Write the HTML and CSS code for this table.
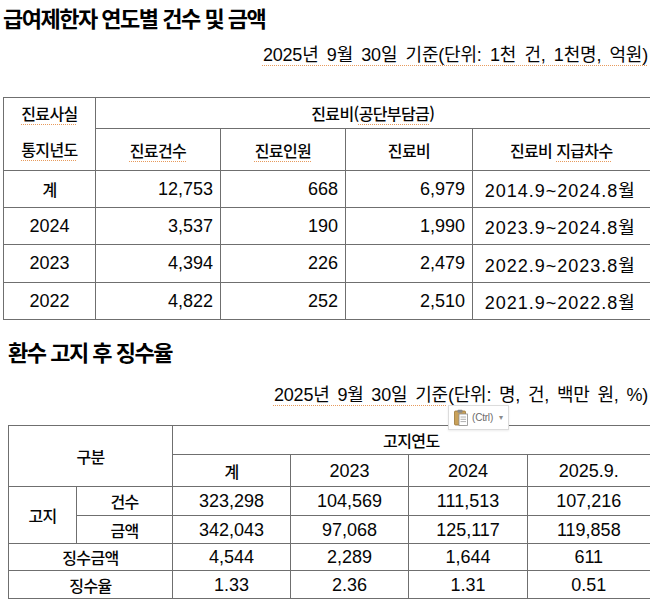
FILE: index.html
```html
<!DOCTYPE html>
<html lang="ko">
<head>
<meta charset="utf-8">
<title>급여제한자 연도별 건수 및 금액</title>
<link rel="stylesheet" href="styles.css">
</head>
<body>
<div class="page">
  <h1 class="title t1">급여제한자 연도별 건수 및 금액</h1>
  <p class="unit u1"><span class="sq">2025년 9월 30일 기준(단위: 1천 건, 1천명, 억원)</span></p>

  <table class="tbl tbl-a">
    <colgroup>
      <col class="a1"><col class="a2"><col class="a3"><col class="a4"><col class="a5">
    </colgroup>
    <tr class="ha1">
      <td class="ko top-split"><span class="sq">진료사실</span></td>
      <td class="ko last" colspan="4">진료비(<span class="sq">공단부담금</span>)</td>
    </tr>
    <tr class="ha2">
      <td class="ko bottom-split"><span class="sq">통지년도</span></td>
      <td class="ko"><span class="sq">진료건수</span></td>
      <td class="ko"><span class="sq">진료인원</span></td>
      <td class="ko">진료비</td>
      <td class="ko last">진료비 <span class="sq">지급차수</span></td>
    </tr>
    <tr class="ra">
      <td class="ko">계</td>
      <td class="num">12,753</td>
      <td class="num">668</td>
      <td class="num">6,979</td>
      <td class="per last">2014.9~2024.8월</td>
    </tr>
    <tr class="ra">
      <td>2024</td>
      <td class="num">3,537</td>
      <td class="num">190</td>
      <td class="num">1,990</td>
      <td class="per last">2023.9~2024.8월</td>
    </tr>
    <tr class="ra rb">
      <td>2023</td>
      <td class="num">4,394</td>
      <td class="num">226</td>
      <td class="num">2,479</td>
      <td class="per last">2022.9~2023.8월</td>
    </tr>
    <tr class="ra">
      <td>2022</td>
      <td class="num">4,822</td>
      <td class="num">252</td>
      <td class="num">2,510</td>
      <td class="per last">2021.9~2022.8월</td>
    </tr>
  </table>

  <h2 class="title t2">환수 고지 후 징수율</h2>
  <p class="unit u2"><span class="sq">2025년 9월 30일 기준</span>(단위: 명, 건, 백만 원, %)</p>

  <div class="wrap-b">
    <div class="paste">
      <svg class="clip" width="14" height="17" viewBox="0 0 14 17" aria-hidden="true">
        <rect x="0.5" y="2" width="11" height="14" rx="1" fill="#c9a15a" stroke="#9a7535" stroke-width="0.8"/>
        <rect x="3.5" y="0.8" width="5" height="3" rx="0.8" fill="#8a8a8a"/>
        <rect x="5" y="5" width="8.5" height="11.5" fill="#ffffff" stroke="#8c8c8c" stroke-width="0.8"/>
        <line x1="6.5" y1="8" x2="12" y2="8" stroke="#9a9a9a" stroke-width="0.8"/>
        <line x1="6.5" y1="10.3" x2="12" y2="10.3" stroke="#9a9a9a" stroke-width="0.8"/>
        <line x1="6.5" y1="12.6" x2="12" y2="12.6" stroke="#9a9a9a" stroke-width="0.8"/>
      </svg>
      <span class="ctrl">(Ctrl)</span>
      <span class="caret">▾</span>
    </div>
    <table class="tbl tbl-b">
      <colgroup>
        <col class="b1"><col class="b2"><col class="b3"><col class="b4"><col class="b5"><col class="b6">
      </colgroup>
      <tr class="hb1">
        <td class="ko" colspan="2" rowspan="2">구분</td>
        <td class="ko last" colspan="4">고지연도</td>
      </tr>
      <tr class="hb2">
        <td class="ko">계</td>
        <td>2023</td>
        <td>2024</td>
        <td class="last">2025.9.</td>
      </tr>
      <tr class="rb1">
        <td class="ko" rowspan="2">고지</td>
        <td class="ko">건수</td>
        <td>323,298</td>
        <td>104,569</td>
        <td>111,513</td>
        <td class="last">107,216</td>
      </tr>
      <tr class="rb2">
        <td class="ko">금액</td>
        <td>342,043</td>
        <td>97,068</td>
        <td>125,117</td>
        <td class="last">119,858</td>
      </tr>
      <tr class="rb3">
        <td class="ko" colspan="2">징수금액</td>
        <td>4,544</td>
        <td>2,289</td>
        <td>1,644</td>
        <td class="last">611</td>
      </tr>
      <tr class="rb4">
        <td class="ko" colspan="2">징수율</td>
        <td>1.33</td>
        <td>2.36</td>
        <td>1.31</td>
        <td class="last">0.51</td>
      </tr>
    </table>
  </div>
</div>
</body>
</html>
```

FILE: styles.css
```css
html, body {
  margin: 0;
  padding: 0;
  background: #ffffff;
  overflow: hidden;
}

body {
  color: #050505;
  font-family: "Liberation Sans", "Noto Sans CJK KR", sans-serif;
}

.page {
  width: 650px;
}

.title {
  margin: 0;
  font-family: "Noto Sans CJK KR", sans-serif;
  font-weight: 700;
  font-size: 22px;
  line-height: 26px;
  letter-spacing: -1.5px;
  color: #000000;
}

.t1 {
  padding: 4px 0 0 3px;
}

.t2 {
  margin-top: 18px;
  padding-left: 8px;
}

.unit {
  margin: 13px 2px 0 0;
  text-align: right;
  font-size: 18px;
  line-height: 24px;
  letter-spacing: -0.2px;
  word-spacing: 3.5px;
  white-space: nowrap;
}

.u2 {
  margin-top: 19px;
  word-spacing: 3px;
}

.sq {
  text-decoration: underline dotted #e79a5c;
  text-decoration-thickness: 1px;
  text-underline-offset: 4px;
}

.tbl {
  border-collapse: collapse;
  table-layout: fixed;
}

.tbl td {
  border: 1px solid #6f6f6f;
  padding: 0 7px;
  font-size: 18px;
  text-align: center;
  vertical-align: middle;
  white-space: nowrap;
}

.tbl td.ko {
  font-family: "Noto Sans CJK KR", sans-serif;
  font-weight: 500;
  font-size: 16px;
  letter-spacing: -0.6px;
}

.tbl td.last {
  border-right: none;
}

.tbl td.num {
  text-align: right;
}

.tbl td.per {
  letter-spacing: 1px;
  padding: 0 10px 0 8px;
}

.tbl td.top-split {
  border-bottom: hidden;
}

/* table A */
.tbl-a {
  margin: 30px 0 0 3px;
  width: 646px;
}

.tbl-a .a1 { width: 92px; }
.tbl-a .a2 { width: 125px; }
.tbl-a .a3 { width: 125px; }
.tbl-a .a4 { width: 127px; }
.tbl-a .a5 { width: 177px; }

.ha1 { height: 31px; }
.ha2 { height: 42px; }
.ra { height: 37px; }
.rb { height: 38px; }

/* table B */
.wrap-b {
  position: relative;
  margin: 18px 0 0 8px;
}

.tbl-b {
  width: 641px;
}

.tbl-b .b1 { width: 68px; }
.tbl-b .b2 { width: 96px; }
.tbl-b .b3 { width: 118px; }
.tbl-b .b4 { width: 118px; }
.tbl-b .b5 { width: 119px; }
.tbl-b .b6 { width: 122px; }

.hb1 { height: 29px; }
.hb2 { height: 32px; }
.rb1 { height: 29px; }
.rb2 { height: 28px; }
.rb3 { height: 27px; }
.rb4 { height: 28px; }

.tbl-b td {
  line-height: 20px;
}

/* paste-options popup */
.paste {
  position: absolute;
  left: 440px;
  top: -20px;
  z-index: 2;
  display: flex;
  align-items: center;
  gap: 4px;
  box-sizing: border-box;
  width: 61px;
  height: 25px;
  padding: 0 4px 0 5px;
  background: #ffffff;
  border: 1px solid #dcdcdc;
  box-shadow: 0 1px 2px rgba(0, 0, 0, 0.08);
}

.clip {
  flex: none;
}

.ctrl {
  font-family: "Liberation Sans", sans-serif;
  font-size: 10px;
  color: #6a6a6a;
  letter-spacing: -0.2px;
}

.caret {
  font-size: 8px;
  color: #8a8a8a;
  margin-left: 2px;
}
```
